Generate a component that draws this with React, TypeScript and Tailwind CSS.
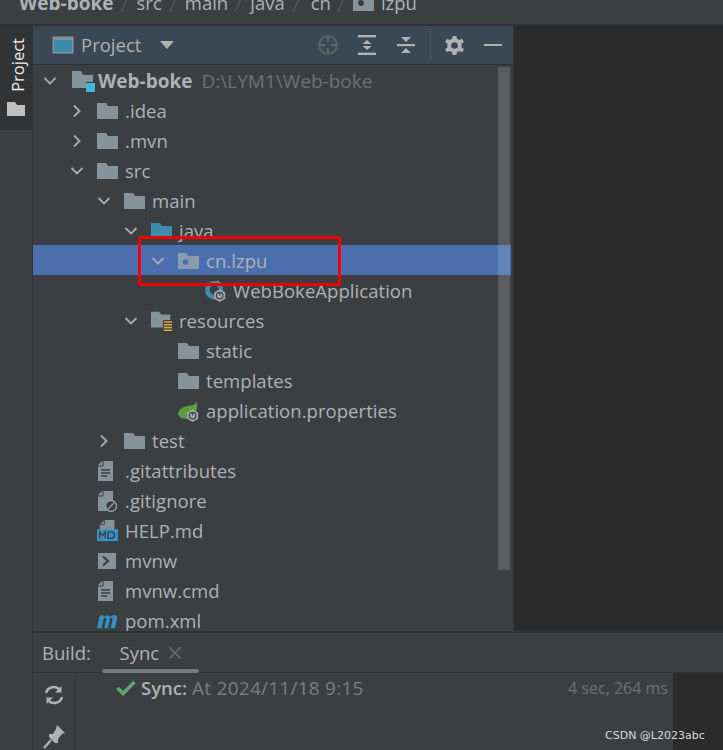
import React from "react";

const Chevron = ({ open }: { open: boolean }) => (
  <svg width="16" height="16" viewBox="0 0 16 16" fill="none" stroke="#a9adb0" strokeWidth="1.8">
    {open ? <path d="M2.5 5 L8 10.5 L13.5 5" /> : <path d="M5 2.5 L10.5 8 L5 13.5" />}
  </svg>
);

const Folder = ({ color = "#87939a" }: { color?: string }) => (
  <svg width="22" height="18" viewBox="0 0 22 18">
    <path d="M0 1 H9 L11 4 H21 V17 H0 Z" fill={color} />
  </svg>
);

const ModuleIcon = () => (
  <svg width="24" height="22" viewBox="0 0 24 22">
    <path d="M0 1 H9 L11 5 H21 V18 H0 Z" fill="#87939a" />
    <rect x="14" y="12" width="9" height="9" fill="#3a3d40" />
    <rect x="14" y="13" width="9" height="9" fill="#40b6e0" />
  </svg>
);

const PackageIcon = () => (
  <svg width="22" height="18" viewBox="0 0 22 18">
    <path d="M0 1 H8 L10 4 H21 V17 H0 Z" fill="#8a9bb0" />
    <circle cx="7.5" cy="10" r="2.8" fill="#4b6eaf" />
  </svg>
);

const ResourcesIcon = () => (
  <svg width="24" height="22" viewBox="0 0 24 22">
    <path d="M0 1 H9 L11 4 H21 V18 H0 Z" fill="#87939a" />
    <rect x="13" y="10" width="10" height="12" fill="#3c3f41" />
    <path d="M14 12 H23 M14 15 H23 M14 18 H23 M14 21 H23" stroke="#e3a73c" strokeWidth="1.6" />
  </svg>
);

const Gear = ({ x, y }: { x: number; y: number }) => (
  <g transform={`translate(${x} ${y})`}>
    <path d="M7 0 L13 3.5 V10.5 L7 14 L1 10.5 V3.5 Z" fill="#a0a8ae" />
    <circle cx="7" cy="7" r="3.6" fill="none" stroke="#3c3f41" strokeWidth="1.3" />
    <path d="M7 4 V7" stroke="#3c3f41" strokeWidth="1.3" />
  </g>
);

const BootAppIcon = () => (
  <svg width="24" height="24" viewBox="0 0 24 24">
    <circle cx="10" cy="11" r="10" fill="#3f8bad" />
    <circle cx="10" cy="11" r="5" fill="#3c3f41" />
    <path d="M13 0 L19 4 L13 6 Z" fill="#59a869" />
    <Gear x={9} y={10} />
  </svg>
);

const SpringIcon = () => (
  <svg width="24" height="24" viewBox="0 0 24 24">
    <path d="M0 15 C1 8 10 6 15 6 C18 5 20 3 20 1 C23 9 19 18 11 20 C6 21 1 20 0 15 Z" fill="#5a9e3f" />
    <Gear x={9} y={10} />
  </svg>
);

const TextFile = ({ badge }: { badge?: boolean }) => (
  <svg width="20" height="22" viewBox="0 0 20 22">
    <path d="M6 1 H16 V21 H1 V6 Z" fill="#87939a" />
    <path d="M1 5 L5 1 V5 Z" fill="#87939a" />
    <path d="M6 1 V6 H1" fill="none" stroke="#3c3f41" strokeWidth="1" />
    {!badge && <path d="M4 10 H13 M4 13 H13 M4 16 H10" stroke="#3c3f41" strokeWidth="1.3" />}
    {badge && (
      <g>
        <circle cx="14" cy="16" r="5.5" fill="#3c3f41" stroke="#9aa2a8" strokeWidth="1.3" />
        <path d="M10.5 19.5 L17.5 12.5" stroke="#9aa2a8" strokeWidth="1.3" />
      </g>
    )}
  </svg>
);

const MdFile = () => (
  <svg width="24" height="24" viewBox="0 0 24 24">
    <path d="M8 0 H19 V11 H3 V5 Z" fill="#87939a" />
    <path d="M8 0 V5 H3" fill="none" stroke="#3c3f41" strokeWidth="1" />
    <rect x="0" y="10" width="23" height="13" fill="#3592c4" />
    <path d="M3 20 V13 L6 17 L9 13 V20 M12 13 V20 H15 Q19 20 19 16.5 Q19 13 15 13 H12" fill="none" stroke="#3c3f41" strokeWidth="1.5" />
  </svg>
);

const ShellFile = () => (
  <svg width="20" height="18" viewBox="0 0 20 18">
    <rect x="1" y="1" width="18" height="16" fill="#87939a" />
    <path d="M6 4.5 L11 9 L6 13.5" fill="none" stroke="#3c3f41" strokeWidth="2.2" />
  </svg>
);

const MavenIcon = () => (
  <svg width="24" height="18" viewBox="0 0 24 18">
    <path d="M0 17 L3 3 H8 L7.5 5 C10 2 13 2 14 5 C16 2 22 1 22 6 L19.5 17 H15 L17 7 C17 5 15 5 14 7 L12 17 H8 L10 7 C10 5 8 5 7 7 L5 17 Z" fill="#3592c4" />
  </svg>
);

type Row = {
  label: string;
  indent: string;
  open?: boolean;
  icon: React.ReactNode;
  selected?: boolean;
};

const rows: Row[] = [
  { label: ".idea", indent: "pl-[36px]", open: false, icon: <Folder /> },
  { label: ".mvn", indent: "pl-[36px]", open: false, icon: <Folder /> },
  { label: "src", indent: "pl-[36px]", open: true, icon: <Folder /> },
  { label: "main", indent: "pl-[63px]", open: true, icon: <Folder /> },
  { label: "java", indent: "pl-[90px]", open: true, icon: <Folder color="#3f8bad" /> },
  { label: "cn.lzpu", indent: "pl-[117px]", open: true, icon: <PackageIcon />, selected: true },
  { label: "WebBokeApplication", indent: "pl-[144px]", icon: <BootAppIcon /> },
  { label: "resources", indent: "pl-[90px]", open: true, icon: <ResourcesIcon /> },
  { label: "static", indent: "pl-[117px]", icon: <Folder /> },
  { label: "templates", indent: "pl-[117px]", icon: <Folder /> },
  { label: "application.properties", indent: "pl-[117px]", icon: <SpringIcon /> },
  { label: "test", indent: "pl-[63px]", open: false, icon: <Folder /> },
  { label: ".gitattributes", indent: "pl-[36px]", icon: <TextFile /> },
  { label: ".gitignore", indent: "pl-[36px]", icon: <TextFile badge /> },
  { label: "HELP.md", indent: "pl-[36px]", icon: <MdFile /> },
  { label: "mvnw", indent: "pl-[36px]", icon: <ShellFile /> },
  { label: "mvnw.cmd", indent: "pl-[36px]", icon: <TextFile /> },
  { label: "pom.xml", indent: "pl-[36px]", icon: <MavenIcon /> },
];

const TreeRow = ({ row }: { row: Row }) => (
  <div className={`flex h-[30px] shrink-0 items-center pt-[2px] ${row.indent} ${row.selected ? "bg-[#4b6eaf]" : ""}`}>
    <div className="flex w-[16px] shrink-0 justify-center">
      {row.open !== undefined && <Chevron open={row.open} />}
    </div>
    <div className="ml-[12px] flex w-[22px] shrink-0 justify-start overflow-visible">{row.icon}</div>
    <span className="ml-[6px] text-[18.5px] leading-[28px] tracking-[0.05px] whitespace-nowrap text-[#afb1b3]">{row.label}</span>
  </div>
);

const Sep = () => (
  <svg width="10" height="20" viewBox="0 0 10 20" fill="none" stroke="#55595c" strokeWidth="1.2">
    <path d="M1 19 L9 1" />
  </svg>
);

export default function App() {
  return (
    <div className="relative flex h-[750px] w-[723px] flex-col overflow-hidden bg-[#3c3f41] font-['Open_Sans','Noto_Sans',sans-serif]">
      {/* breadcrumb, cut off by the top of the shot */}
      <div className="flex h-[24px] shrink-0 items-start overflow-hidden bg-[#3c3f41] pl-[19px] text-[18.5px] leading-[22px] text-[#afb1b3]">
        <div className="-mt-[8px] flex items-center">
          <span className="text-[19px] font-bold">Web-boke</span>
          <span className="ml-[6px] mr-[7px]"><Sep /></span>
          <span>src</span>
          <span className="ml-[7px] mr-[6px]"><Sep /></span>
          <span>main</span>
          <span className="ml-[6px] mr-[6px]"><Sep /></span>
          <span>java</span>
          <span className="ml-[7px] mr-[9px]"><Sep /></span>
          <span>cn</span>
          <span className="ml-[6px] mr-[6px]"><Sep /></span>
          <svg className="mr-[7px]" width="21" height="18" viewBox="0 0 21 18">
            <path d="M0 0 H21 V17 H0 Z" fill="#87939a" />
            <circle cx="8" cy="9" r="3" fill="#3c3f41" />
          </svg>
          <span>lzpu</span>
        </div>
      </div>

      <div className="flex min-h-0 flex-1 border-t-2 border-[#323232]">
        {/* left tool rail */}
        <div className="flex w-[33px] shrink-0 flex-col border-r border-[#2f3133] bg-[#3c3f41]">
          <div className="flex h-[104px] flex-col items-center bg-[#313335] pl-[3px] pt-[12px]">
            <span className="rotate-180 text-[16.5px] leading-[18px] text-[#f0f0f0] [writing-mode:vertical-rl]">Project</span>
            <svg className="ml-[-3px] mt-[10px]" width="18" height="14" viewBox="0 0 18 14">
              <path d="M0 0 H8 L10 3 H18 V14 H0 Z" fill="#c0c0c0" />
            </svg>
          </div>
        </div>

        <div className="flex min-w-0 flex-1 flex-col">
          <div className="flex min-h-0 flex-1">
            {/* project panel */}
            <div className="flex w-[480px] shrink-0 flex-col overflow-hidden bg-[#3c3f41]">
              <div className="flex h-[39px] shrink-0 items-center border-b border-[#323232] bg-[#3a4755] pl-[19px] pr-[11px]">
                <svg width="22" height="18" viewBox="0 0 22 18">
                  <rect x="0.5" y="0.5" width="21" height="17" fill="#87939a" />
                  <rect x="2" y="4" width="18" height="12" fill="#3f8bad" />
                </svg>
                <span className="ml-[7px] text-[18.5px] text-[#afb1b3]">Project</span>
                <svg className="ml-[19px]" width="14" height="8" viewBox="0 0 14 8">
                  <path d="M0 0 H14 L7 8 Z" fill="#afb1b3" />
                </svg>
                <svg className="ml-auto" width="20" height="20" viewBox="0 0 20 20" fill="none" stroke="#5d6369" strokeWidth="2">
                  <circle cx="10" cy="10" r="8.8" />
                  <path d="M10 1 V7 M10 13 V19 M1 10 H7 M13 10 H19" />
                </svg>
                <svg className="ml-[20px]" width="18" height="20" viewBox="0 0 18 20" fill="#afb1b3">
                  <rect x="0" y="0" width="18" height="2.4" />
                  <rect x="0" y="17.6" width="18" height="2.4" />
                  <path d="M9 5 L13.5 9 H4.5 Z M9 15 L13.5 11 H4.5 Z" />
                </svg>
                <svg className="ml-[21px]" width="18" height="18" viewBox="0 0 18 18" fill="#afb1b3">
                  <rect x="0" y="8" width="18" height="2.2" />
                  <path d="M4 1 H14 L9 6 Z M9 12 L14 17 H4 Z" />
                </svg>
                <div className="ml-[15px] h-[30px] w-[1px] bg-[#51575c]" />
                <svg className="ml-[14px]" width="19" height="19" viewBox="0 0 20 20">
                  <path d="M8 0 H12 L12.6 3 L15 4.2 L17.8 2.8 L20 6 L17.5 8 V12 L20 14 L17.8 17.2 L15 15.8 L12.6 17 L12 20 H8 L7.4 17 L5 15.8 L2.2 17.2 L0 14 L2.5 12 V8 L0 6 L2.2 2.8 L5 4.2 L7.4 3 Z" fill="#afb1b3" />
                  <circle cx="10" cy="10" r="3.5" fill="#3a4755" />
                </svg>
                <div className="ml-[20px] h-[2px] w-[18px] bg-[#afb1b3]" />
              </div>

              <div className="relative flex min-h-0 flex-1 flex-col overflow-hidden pr-[2px]">
                <div className="flex h-[30px] shrink-0 items-center pl-[9px] pt-[2px]">
                  <div className="flex w-[16px] shrink-0 justify-center"><Chevron open /></div>
                  <div className="ml-[14px] w-[26px] shrink-0"><ModuleIcon /></div>
                  <span className="text-[19px] font-bold text-[#afb1b3]">Web-boke</span>
                  <span className="ml-[9px] text-[19px] text-[#6e7072]">D:\LYM1\Web-boke</span>
                </div>
                {rows.map((row) => (
                  <TreeRow key={row.label} row={row} />
                ))}
                <div className="absolute right-[3px] top-[2px] h-[503px] w-[12px] bg-white/15" />
              </div>
            </div>
            {/* editor area */}
            <div className="min-w-0 flex-1 border-l border-[#323232] bg-[#2b2b2b]" />
          </div>

          {/* build tool window */}
          <div className="flex h-[119px] shrink-0 flex-col border-t-2 border-[#323232]">
            <div className="flex h-[40px] shrink-0 border-b border-[#323232] pl-[9px]">
              <span className="self-center text-[18.5px] text-[#afb1b3]">Build:</span>
              <div className="relative ml-[11px] flex w-[97px] items-center justify-center">
                <span className="text-[18.5px] text-[#afb1b3]">Sync</span>
                <svg className="ml-[10px]" width="12" height="12" viewBox="0 0 12 12" fill="none" stroke="#6e7072" strokeWidth="1.5">
                  <path d="M0.5 0.5 L11.5 11.5 M11.5 0.5 L0.5 11.5" />
                </svg>
                <div className="absolute bottom-[-1px] left-0 h-[4px] w-[97px] rounded-full bg-[#747a80]" />
              </div>
            </div>
            <div className="flex min-h-0 flex-1">
              <div className="flex w-[43px] shrink-0 flex-col items-center gap-[20px] border-r border-[#323232] pt-[12px]">
                <svg width="20" height="20" viewBox="0 0 20 20" fill="none" stroke="#afb1b3" strokeWidth="2.6">
                  <path d="M2 8 A8 8 0 0 1 16 5" />
                  <path d="M18 12 A8 8 0 0 1 4 15" />
                  <path d="M17.5 1 V7.5 H11 Z" fill="#afb1b3" stroke="none" />
                  <path d="M2.5 19 V12.5 H9 Z" fill="#afb1b3" stroke="none" />
                </svg>
                <svg width="22" height="24" viewBox="0 0 22 24">
                  <path d="M14 0 L22 8 L19 9 L15 14 L15 18 L12 18 L6 12 L6 9 L10 9 L13 4 Z" fill="#afb1b3" />
                  <path d="M8 15 L1 23" stroke="#afb1b3" strokeWidth="2.4" />
                </svg>
              </div>
              <div className="flex min-w-0 flex-1 items-start">
                <div className="flex h-[30px] w-[597px] shrink-0 items-center pl-[40px]">
                  <svg width="20" height="16" viewBox="0 0 20 16" fill="none" stroke="#59a869" strokeWidth="3.6">
                    <path d="M1.5 8 L7 13.5 L18.5 2" />
                  </svg>
                  <span className="ml-[5px] text-[18.5px] font-semibold text-[#afb1b3]">Sync:</span>
                  <span className="ml-[5px] text-[19px] tracking-[0.25px] text-[#7a7d80]">At 2024/11/18 9:15</span>
                  <span className="ml-auto pr-[5px] text-[16px] text-[#6e7072]">4 sec, 264 ms</span>
                </div>
                <div className="h-full flex-1 bg-[#2b2b2b]" />
              </div>
            </div>
          </div>
        </div>
      </div>

      {/* hand drawn highlight and the site watermark */}
      <div className="absolute left-[138px] top-[236px] h-[50px] w-[203px] rounded-[2px] border-[3px] border-[#f00000]" />
      <span className="absolute left-[605px] top-[728px] font-['DejaVu_Sans',sans-serif] text-[11px] leading-[16px] text-[#d8d8d8]">CSDN @L2023abc</span>
    </div>
  );
}
